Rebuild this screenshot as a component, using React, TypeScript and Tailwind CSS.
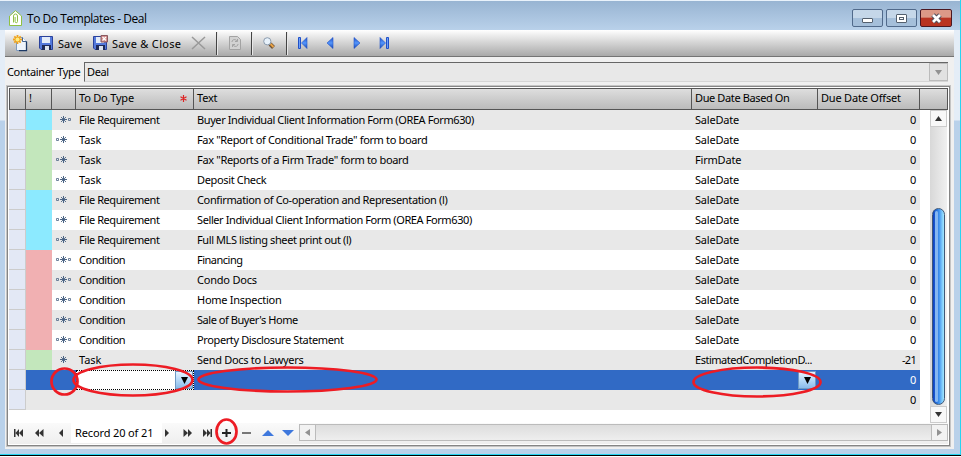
import { useState } from "react";
import type { ReactNode } from "react";
import clsx from "clsx";

type Row = { kind: string; text: string; basis: string; offset: string; link: "left" | "right" | "both" | "none"; fit: string };

const rows: Row[] = [
  { kind: "File Requirement", text: "Buyer Individual Client Information Form (OREA Form630)", basis: "SaleDate", offset: "0", link: "right", fit: "tracking-[-0.4px]" },
  { kind: "Task", text: 'Fax "Report of Conditional Trade" form to board', basis: "SaleDate", offset: "0", link: "left", fit: "tracking-[-0.35px]" },
  { kind: "Task", text: 'Fax "Reports of a Firm Trade" form to board', basis: "FirmDate", offset: "0", link: "left", fit: "tracking-[-0.32px]" },
  { kind: "Task", text: "Deposit Check", basis: "SaleDate", offset: "0", link: "left", fit: "tracking-[-0.35px]" },
  { kind: "File Requirement", text: "Confirmation of Co-operation and Representation (l)", basis: "SaleDate", offset: "0", link: "left", fit: "tracking-[-0.36px]" },
  { kind: "File Requirement", text: "Seller Individual Client Information Form (OREA Form630)", basis: "SaleDate", offset: "0", link: "left", fit: "tracking-[-0.4px]" },
  { kind: "File Requirement", text: "Full MLS listing sheet print out (l)", basis: "SaleDate", offset: "0", link: "left", fit: "tracking-[-0.4px]" },
  { kind: "Condition", text: "Financing", basis: "SaleDate", offset: "0", link: "both", fit: "tracking-[-0.5px]" },
  { kind: "Condition", text: "Condo Docs", basis: "SaleDate", offset: "0", link: "both", fit: "tracking-[-0.2px]" },
  { kind: "Condition", text: "Home Inspection", basis: "SaleDate", offset: "0", link: "both", fit: "tracking-[-0.27px]" },
  { kind: "Condition", text: "Sale of Buyer's Home", basis: "SaleDate", offset: "0", link: "both", fit: "tracking-[-0.45px]" },
  { kind: "Condition", text: "Property Disclosure Statement", basis: "SaleDate", offset: "0", link: "both", fit: "tracking-[-0.38px]" },
  { kind: "Task", text: "Send Docs to Lawyers", basis: "EstimatedCompletionD...", offset: "-21", link: "none", fit: "tracking-[-0.3px]" },
];

const kindColor: Record<string, string> = {
  "File Requirement": "bg-[#8ceaff]",
  Task: "bg-[#c3e7bc]",
  Condition: "bg-[#f1b0b2]",
};

const columns = "grid grid-cols-[17px_26px_24px_118px_498px_126px_102px]";

function LinkIcon({ link }: { link: Row["link"] }) {
  return (
    <svg width="15" height="8" viewBox="0 0 15 8" fill="none" stroke="#4b6485">
      <path d="M7.5 0v7M4 3.5h7" />
      <path d="M5 1l5 5M10 1L5 6" strokeWidth=".9" />
      {(link === "left" || link === "both") && <path d="M.5 2.500h2v2h-2z" strokeWidth=".8" />}
      {(link === "right" || link === "both") && <path d="M12.500 2.500h2v2h-2z" strokeWidth=".8" />}
    </svg>
  );
}

function NewIcon() {
  return (
    <svg width="15" height="17" viewBox="0 0 15 17">
      <path d="M3.500 2.500h6l4 4v9h-10z" fill="#eef4fb" stroke="#7d9abf" />
      <path d="M9.500 2.500v4h4" fill="#fff" stroke="#47658f" />
      <path d="M13.500 6.500v9.200H6" fill="none" stroke="#1d3a66" strokeWidth="1.300" />
      <path d="M4.500 0v9M0 4.500h9M1.300 1.300l6.400 6.400M7.700 1.300L1.300 7.700" stroke="#f0a31c" strokeWidth="1.800" />
      <circle cx="4.500" cy="4.500" r="2" fill="#ffec80" />
    </svg>
  );
}

function DiskIcon({ close }: { close?: boolean }) {
  return (
    <svg width="15" height="15" viewBox="0 0 15 15" className="overflow-visible">
      <path d="M.5.5h13v13H2L.5 12z" fill="#5479dc" stroke="#2b429b" />
      <path d="M3 1h8v6H3z" fill="#e4ecf9" />
      <path d="M3 9h9v5H3z" fill="#1f2a58" />
      <path d="M6 10h4v4H6z" fill="#dce3ee" />
      {close && (
        <>
          <path d="M8-.500h6.500v6.500H8z" fill="#d08a88" stroke="#8a5960" />
          <path d="M9.500 1l3.500 3.500M13 1L9.500 4.500" stroke="#fff" strokeWidth="1.200" />
        </>
      )}
    </svg>
  );
}

function RefreshIcon() {
  return (
    <svg width="12" height="14" viewBox="0 0 12 14" fill="none" stroke="#a3a3a3">
      <path d="M.5.5h8l3 3v10H.5z" fill="#d2d2d2" />
      <path d="M3 6c0-3 4-3 5-1M8.500 3v2.500H6M9 8c0 3-4 3-5 1M3.500 11V8.500H6" />
    </svg>
  );
}

function SearchIcon() {
  return (
    <svg width="12" height="12" viewBox="0 0 12 12">
      <path d="M7 7l3.500 3.500" stroke="#6e5236" strokeWidth="4" />
      <path d="M7.500 7l3 3" stroke="#eaa447" strokeWidth="2" />
      <circle cx="4.300" cy="4.300" r="3.600" fill="#e8f2fb" stroke="#8b9bad" />
    </svg>
  );
}

function BlueArrow({ flip, bar }: { flip?: boolean; bar?: boolean }) {
  return (
    <svg width="10" height="12" viewBox="0 0 10 12" className={clsx(flip && "-scale-x-100")}>
      <defs>
        <linearGradient id="blue" x1="0" y1="0" x2="0" y2="1">
          <stop stopColor="#2050c8" />
          <stop offset=".5" stopColor="#5496fb" />
          <stop offset="1" stopColor="#1444b4" />
        </linearGradient>
      </defs>
      <path d={bar ? "M9 .500v11L3.500 6z" : "M8 .500v11L2 6z"} fill="url(#blue)" stroke="#2454ca" strokeWidth=".6" />
      {bar && <path d="M.5.5h2v11h-2z" fill="#6c9ff8" stroke="#2050c8" />}
    </svg>
  );
}

function NavIcon({ shape, flip }: { shape: "first" | "page" | "step"; flip?: boolean }) {
  return (
    <svg width="11" height="8" viewBox="0 0 11 8" fill="#333" className={clsx(flip && "-scale-x-100")}>
      {shape === "first" && <path d="M1 0h1.500v8H1zM6 0v8L2.500 4zM10 0v8L6 4z" />}
      {shape === "page" && <path d="M5 0v8L1 4zM9.500 0v8L5 4z" />}
      {shape === "step" && <path d="M8 0v8L4 4z" />}
    </svg>
  );
}

function Triangle({ dir, dim }: { dir: "up" | "down" | "left" | "right"; dim?: boolean }) {
  const paths = { up: "M3.500 1L7 6H0z", down: "M0 1h7L3.500 6z", left: "M6 0v7L1 3.500z", right: "M1 0v7l5-3.500z" };
  return (
    <svg width="7" height="7" viewBox="0 0 7 7">
      <path d={paths[dir]} fill={dim ? "#929292" : "#333"} />
    </svg>
  );
}

function HeaderCell({ children }: { children?: ReactNode }) {
  return <div className="flex items-center justify-between overflow-hidden border-r border-[#555] pr-[6px] pb-[2px] pl-[3px] whitespace-nowrap">{children}</div>;
}

function DropButton() {
  return (
    <button className="flex h-[18px] w-[18px] items-center justify-center border border-[#6f9ac5] bg-linear-to-b from-[#e6f3ff] via-[#b6d9f8] to-[#8abbea]">
      <svg width="7" height="7" viewBox="0 0 7 7"><path d="M0 0h7L3.500 7z" /></svg>
    </button>
  );
}

function Separator() {
  return <div className="h-[23px] w-[2px] border-l border-[#444] bg-[#e8e8e8]" />;
}

function Ring({ cls, w, h }: { cls: string; w: number; h: number }) {
  return (
    <svg className={clsx("pointer-events-none absolute", cls)} width={w} height={h} viewBox={`0 0 ${w} ${h}`}>
      <ellipse cx={w / 2} cy={h / 2} rx={w / 2 - 1.5} ry={h / 2 - 1.5} fill="none" stroke="#ed1c24" strokeWidth="2.700" />
    </svg>
  );
}

export default function App() {
  const [selected, setSelected] = useState(13);

  return (
    <div className="relative flex h-[457px] w-[961px] flex-col overflow-hidden bg-linear-to-b from-[#e4edf7] from-[120px] to-[#b9d1ea] to-[121px] font-['Noto_Sans',sans-serif] text-[11px] leading-[20px] tracking-[-0.2px] text-black">
      <header className="flex h-[30px] shrink-0 items-start border-t border-[#e9f2fb] bg-linear-to-b from-[#98b4d2] to-[#b9d1ea] pl-[9px]">
        <svg className="mt-[9px]" width="13" height="16" viewBox="0 0 13 16" fill="none" stroke="#8fc043">
          <path d="M.5 6L6.500.700l6 5.300v9.500H.5z" fill="#fff" />
          <path d="M4.500 12.500V6a2 2 0 014 0v5.500a1.200 1.200 0 01-2.400 0V7" />
        </svg>
        <h1 className="mt-[8px] ml-[5px] font-['Open_Sans',sans-serif] text-[12px] leading-[20px] tracking-[-0.45px]">To Do Templates - Deal</h1>
        <div className="mt-[8px] mr-[9px] ml-auto flex gap-[3px]">
          <button className="flex h-[18px] w-[31px] items-center justify-center rounded-[2px] border border-[#516a8b] bg-linear-to-b from-[#c5d7e9] from-50% to-[#a5bfda] to-50%">
            <span className="mt-1 h-[5px] w-[11px] rounded-[1px] border border-[#54606e] bg-white" />
          </button>
          <button className="flex h-[18px] w-[31px] items-center justify-center rounded-[2px] border border-[#516a8b] bg-linear-to-b from-[#c5d7e9] from-50% to-[#a5bfda] to-50%">
            <span className="flex h-[9px] w-[11px] items-center justify-center rounded-[1px] border border-[#54606e] bg-white"><i className="h-[3px] w-[5px] border border-[#54606e]" /></span>
          </button>
          <button className="flex h-[18px] w-[32px] items-center justify-center rounded-[2px] border border-[#4b1822] bg-linear-to-b from-[#dc9987] from-45% to-[#b93422] to-50%">
            <svg width="13" height="11" viewBox="0 0 13 11"><path d="M3 2l7 7M10 2L3 9" stroke="#54505c" strokeWidth="4.800" /><path d="M3 2l7 7M10 2L3 9" stroke="#fff" strokeWidth="2.700" /></svg>
          </button>
        </div>
      </header>

      <main className="mr-[7px] ml-[5px] flex h-[419px] shrink-0 flex-col bg-[#f0f0f0]">
        <div className="flex h-[27px] shrink-0 items-center border-b border-[#747474] bg-linear-to-b from-white to-[#a9a9a9] pl-[8px]">
          <NewIcon />
          <button className="ml-[11px] flex w-[54px] items-center gap-[4px] tracking-[0.05px] whitespace-nowrap"><DiskIcon /><span className="pt-px">Save</span></button>
          <button className="flex w-[98px] items-center gap-[4px] tracking-[0.3px] whitespace-nowrap"><DiskIcon close /><span className="pt-px">Save &amp; Close</span></button>
          <svg className="mr-[9px]" width="16" height="14" viewBox="0 0 16 14"><path d="M1 1l13 12M14 1L1 13" stroke="#999" strokeWidth="1.500" /></svg>
          <Separator />
          <div className="flex w-[33px] justify-center"><RefreshIcon /></div>
          <Separator />
          <div className="flex w-[33px] justify-center pr-px"><SearchIcon /></div>
          <Separator />
          <div className="ml-[10px] flex gap-[17px]"><BlueArrow bar /><BlueArrow /><BlueArrow flip /><BlueArrow flip bar /></div>
        </div>

        <div className="mt-[5px] flex h-[20px] shrink-0 pl-[2px]">
          <label className="w-[77px] tracking-[-0.35px] whitespace-nowrap">Container Type</label>
          <div className="flex w-[864px] items-center justify-between border-t border-b border-l border-t-[#666] border-b-[#d5d5d5] border-l-[#666] bg-[#e8e8e8] pl-[2px]">
            <span className="tracking-[-0.35px]">Deal</span>
            <button className="flex h-[18px] w-[19px] items-center justify-center border border-[#bbb] bg-[#e1e1e1]"><Triangle dir="down" dim /></button>
          </div>
        </div>

        <section className="mt-[4px] ml-[2px] flex h-[360px] w-[943px] shrink-0 flex-col border border-[#858585] bg-white p-px outline outline-[#c4c4c4]">
          <div className="flex h-[22px] shrink-0 border border-r border-[#555] bg-linear-to-b from-[#dedede] to-[#bbb]">
            <div className={clsx(columns, "-ml-px")}>
              <HeaderCell />
              <HeaderCell>!</HeaderCell>
              <HeaderCell />
              <HeaderCell>
                <span>To Do Type</span>
                <svg width="7" height="7" viewBox="0 0 7 7" stroke="#dd2525" strokeWidth="1.200"><path d="M3.500 0v7M.5 1.800l6 3.400M6.500 1.800l-6 3.400" /></svg>
              </HeaderCell>
              <HeaderCell>Text</HeaderCell>
              <HeaderCell><span className="tracking-[-0.38px]">Due Date Based On</span></HeaderCell>
              <HeaderCell>Due Date Offset</HeaderCell>
            </div>
          </div>
          <div className="flex h-[313px] shrink-0">
            <div className="w-[911px]">
              {rows.map((r, i) => (
                <div key={i} onClick={() => setSelected(i)} className={clsx(columns, "h-[20px] whitespace-nowrap", selected === i ? "bg-[#316ac5] text-white" : i % 2 ? "bg-white" : "bg-[#e8e8e8]")}>
                  <div className="border-r border-b border-[#ccc] bg-[#e3e8f5]" />
                  <div className={kindColor[r.kind]} />
                  <div className="flex items-center pl-[4px]"><LinkIcon link={r.link} /></div>
                  <span className={clsx("pl-[3px]", r.kind === "Task" ? "tracking-[-0.1px]" : "tracking-[-0.45px]")}>{r.kind}</span>
                  <span className={clsx("pl-[3px]", r.fit)}>{r.text}</span>
                  <span className={clsx("pl-[3px]", r.basis.length > 8 && "tracking-[-0.48px]")}>{r.basis}</span>
                  <span className={clsx("pr-[4px] text-right", r.offset.length > 1 && "tracking-[-0.7px]")}>{r.offset}</span>
                </div>
              ))}
              <div onClick={() => setSelected(13)} className={clsx(columns, "h-[20px] bg-[#316ac5] text-white")}>
                <div className="border-r border-b border-[#ccc] bg-[#e3e8f5]" />
                <div /><div />
                <div className="flex items-center justify-end border border-dotted border-black bg-white"><DropButton /></div>
                <div />
                <div className="flex items-center justify-end pr-[2px]"><DropButton /></div>
                <span className="pr-[4px] text-right">0</span>
              </div>
              <div className={clsx(columns, "h-[20px] bg-[#e8e8e8]")}>
                <div className="border-r border-b border-[#ccc] bg-[#e3e8f5]" />
                <div /><div /><div /><div /><div />
                <span className="pr-[4px] text-right">0</span>
              </div>
            </div>
            <div className="ml-[10px] flex w-[17px] flex-col items-center bg-linear-to-r from-[#d8d8d8] to-[#f0f0f0]">
              <button className="flex h-[17px] w-full items-center justify-center border border-[#ccc] bg-[#f8f8f8]"><Triangle dir="up" /></button>
              <div className="mt-[81px] h-[197px] w-[13px] rounded-full border border-[#3f5878] bg-linear-to-r from-[#0f3fc0] via-[#3f92ee] via-55% to-[#a5eaff] p-[2px]">
                <div className="h-full w-[3px] rounded-full bg-[#86b8f2]" />
              </div>
              <button className="mt-auto flex h-[17px] w-full items-center justify-center border border-[#ccc] bg-[#f8f8f8]"><Triangle dir="down" /></button>
            </div>
          </div>
          <footer className="flex h-[21px] shrink-0 items-center bg-linear-to-b from-[#fafafa] to-[#eee] pb-[2px]">
            <div className="flex w-[62px] items-center gap-[10px] pl-[4px]"><NavIcon shape="first" /><NavIcon shape="page" /><NavIcon shape="step" /></div>
            <span className="w-[91px] bg-white pl-[4px] tracking-[-0.13px] whitespace-nowrap">Record 20 of 21</span>
            <div className="flex w-[55px] items-center gap-[9px]"><NavIcon shape="step" flip /><NavIcon shape="page" flip /><NavIcon shape="first" flip /></div>
            <svg className="ml-[5px]" width="72" height="10" viewBox="0 0 72 10">
              <path d="M0 5h9M4.500 1v8" stroke="#222" strokeWidth="2" />
              <path d="M20 5h9" stroke="#777" strokeWidth="2" />
              <path d="M40 8l6-6 6 6z" fill="#3e78dd" />
              <path d="M60 2l6 6 6-6z" fill="#3e78dd" />
            </svg>
            <div className="ml-auto flex h-[17px] w-[649px] justify-between border border-[#bbb] bg-linear-to-b from-[#ddd] to-[#eee]">
              <button className="flex w-[16px] items-center justify-center border-r border-[#bbb] bg-[#f2f2f2]"><Triangle dir="left" dim /></button>
              <button className="flex w-[16px] items-center justify-center border-l border-[#bbb] bg-[#f2f2f2]"><Triangle dir="right" dim /></button>
            </div>
          </footer>
        </section>
      </main>
      <div className="mt-auto h-[3px] border-t border-b border-t-[#26d4f1] border-b-white bg-black" />
      <div className="absolute top-0 right-0 h-[455px] w-px bg-[#26d4f1]" />

      <Ring cls="left-[50px] top-[367px]" w={29} h={29} />
      <Ring cls="left-[72px] top-[363px]" w={122} h={34} />
      <Ring cls="left-[197px] top-[366px]" w={181} h={27} />
      <Ring cls="left-[692px] top-[366px]" w={130} h={32} />
      <Ring cls="left-[215px] top-[418px]" w={23} h={27} />
    </div>
  );
}
